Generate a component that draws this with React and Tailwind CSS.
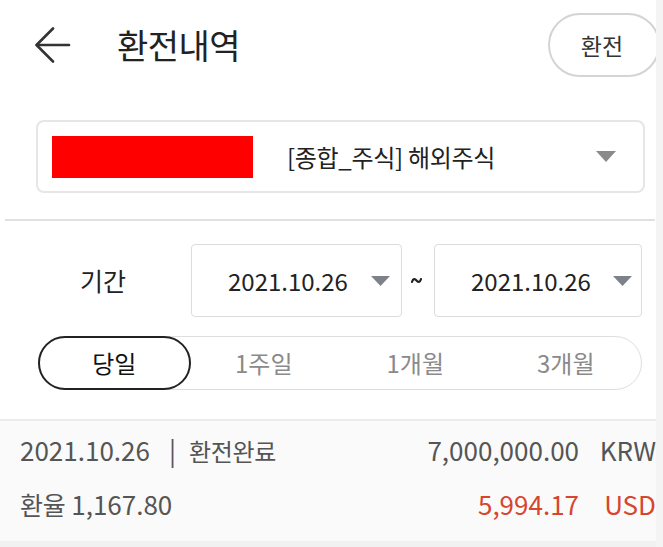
export default function App() {
  const font = { fontFamily: '"Noto Sans CJK KR", "Noto Sans", sans-serif' };
  return (
    <div className="w-[663px] h-[547px] flex bg-[#f4f4f4] overflow-hidden" style={font}>
      <div className="w-[656px] h-full bg-white flex flex-col overflow-hidden">
        {/* Header */}
        <div className="h-[90px] flex items-center pl-[35px] shrink-0">
          <svg width="36" height="36" viewBox="0 0 36 36" fill="none" stroke="#333" strokeWidth="2.6" strokeLinecap="round" strokeLinejoin="round">
            <path d="M34 18H2" />
            <path d="M18 1.5L1.5 18L18 34.5" />
          </svg>
          <div className="ml-[46px] text-[34px] leading-none text-[#222] tracking-[-0.5px]">환전내역</div>
          <div className="ml-auto mr-[-4px] w-[112px] h-[64px] shrink-0 rounded-full border-2 border-[#d4d4d4] flex items-center justify-center text-[23px] text-[#333] pr-[4px]">
            환전
          </div>
        </div>
        {/* Account selector */}
        <div className="mt-[30px] ml-[36px] w-[609px] h-[73px] border-2 border-[#e6e6e6] rounded-[8px] flex items-center pl-[14px] pr-[27px] shrink-0">
          <div className="w-[201px] h-[42px] bg-[#ff0000]" />
          <div className="ml-[34px] text-[24px] text-[#222] tracking-[-0.3px]">[종합_주식] 해외주식</div>
          <svg className="ml-auto" width="20" height="11" viewBox="0 0 20 11"><path d="M0 0H20L10 11Z" fill="#8a8a8a" /></svg>
        </div>
        {/* Divider */}
        <div className="mt-[26px] ml-[5px] w-[650px] h-[2px] bg-[#e0e0e0] shrink-0" />
        {/* Period */}
        <div className="mt-[23px] flex items-center h-[73px] shrink-0">
          <div className="w-[191px] pl-[80px] text-[25px] text-[#222]">기간</div>
          <div className="w-[211px] h-[73px] border-[1.5px] border-[#dcdcdc] rounded-[4px] flex items-center pl-[36px] pr-[11px]">
            <span className="text-[24px] text-[#222]">2021.10.26</span>
            <svg className="ml-auto" width="19" height="10" viewBox="0 0 19 10"><path d="M0 0H19L9.5 10Z" fill="#7c818a" /></svg>
          </div>
          <div className="w-[32px] flex justify-center pr-[4px]">
            <svg width="11" height="7" viewBox="0 0 11 7"><path d="M1 5C2 1.5 4 1.5 5.5 3.5C7 5.5 9 5.5 10 2" fill="none" stroke="#222" strokeWidth="2.2" strokeLinecap="round" /></svg>
          </div>
          <div className="w-[208px] h-[73px] border-[1.5px] border-[#dcdcdc] rounded-[4px] flex items-center pl-[36px] pr-[9px]">
            <span className="text-[24px] text-[#222]">2021.10.26</span>
            <svg className="ml-auto" width="19" height="10" viewBox="0 0 19 10"><path d="M0 0H19L9.5 10Z" fill="#7c818a" /></svg>
          </div>
        </div>
        {/* Segment */}
        <div className="mt-[19px] ml-[38px] w-[604px] h-[54px] rounded-full border border-[#dedede] grid grid-cols-4 shrink-0">
          <div className="-m-px rounded-full border-2 border-[#222] flex items-center justify-center text-[24px] text-[#111]">당일</div>
          <div className="flex items-center justify-center text-[24px] text-[#8a8a8a] pr-[2px]">1주일</div>
          <div className="flex items-center justify-center text-[24px] text-[#8a8a8a]">1개월</div>
          <div className="flex items-center justify-center text-[24px] text-[#8a8a8a]">3개월</div>
        </div>
        {/* List */}
        <div className="mt-[29px] border-t-2 border-[#ececec] bg-[#fafafa] h-[122px] flex flex-col shrink-0 pl-[20px] text-[26px] text-[#555]">
          <div className="h-[56px] flex items-center">
            <div className="w-full flex items-baseline">
              <span>2021.10.26</span>
              <span className="ml-[19px]">|</span>
              <span className="ml-[13px] text-[24px] tracking-[-0.3px]">환전완료</span>
              <span className="ml-auto">7,000,000.00</span>
              <span className="w-[77px] text-right">KRW</span>
            </div>
          </div>
          <div className="h-[54px] flex items-center">
            <div className="w-full flex items-baseline">
              <span><span className="text-[25px] tracking-[-0.3px]">환율</span> 1,167.80</span>
              <span className="ml-auto text-[#d6452f]">5,994.17</span>
              <span className="w-[77px] text-right text-[#d6452f]">USD</span>
            </div>
          </div>
        </div>
        <div className="flex-1 bg-[#f1f1f1]" />
      </div>
      <div className="flex-1" />
    </div>
  );
}
